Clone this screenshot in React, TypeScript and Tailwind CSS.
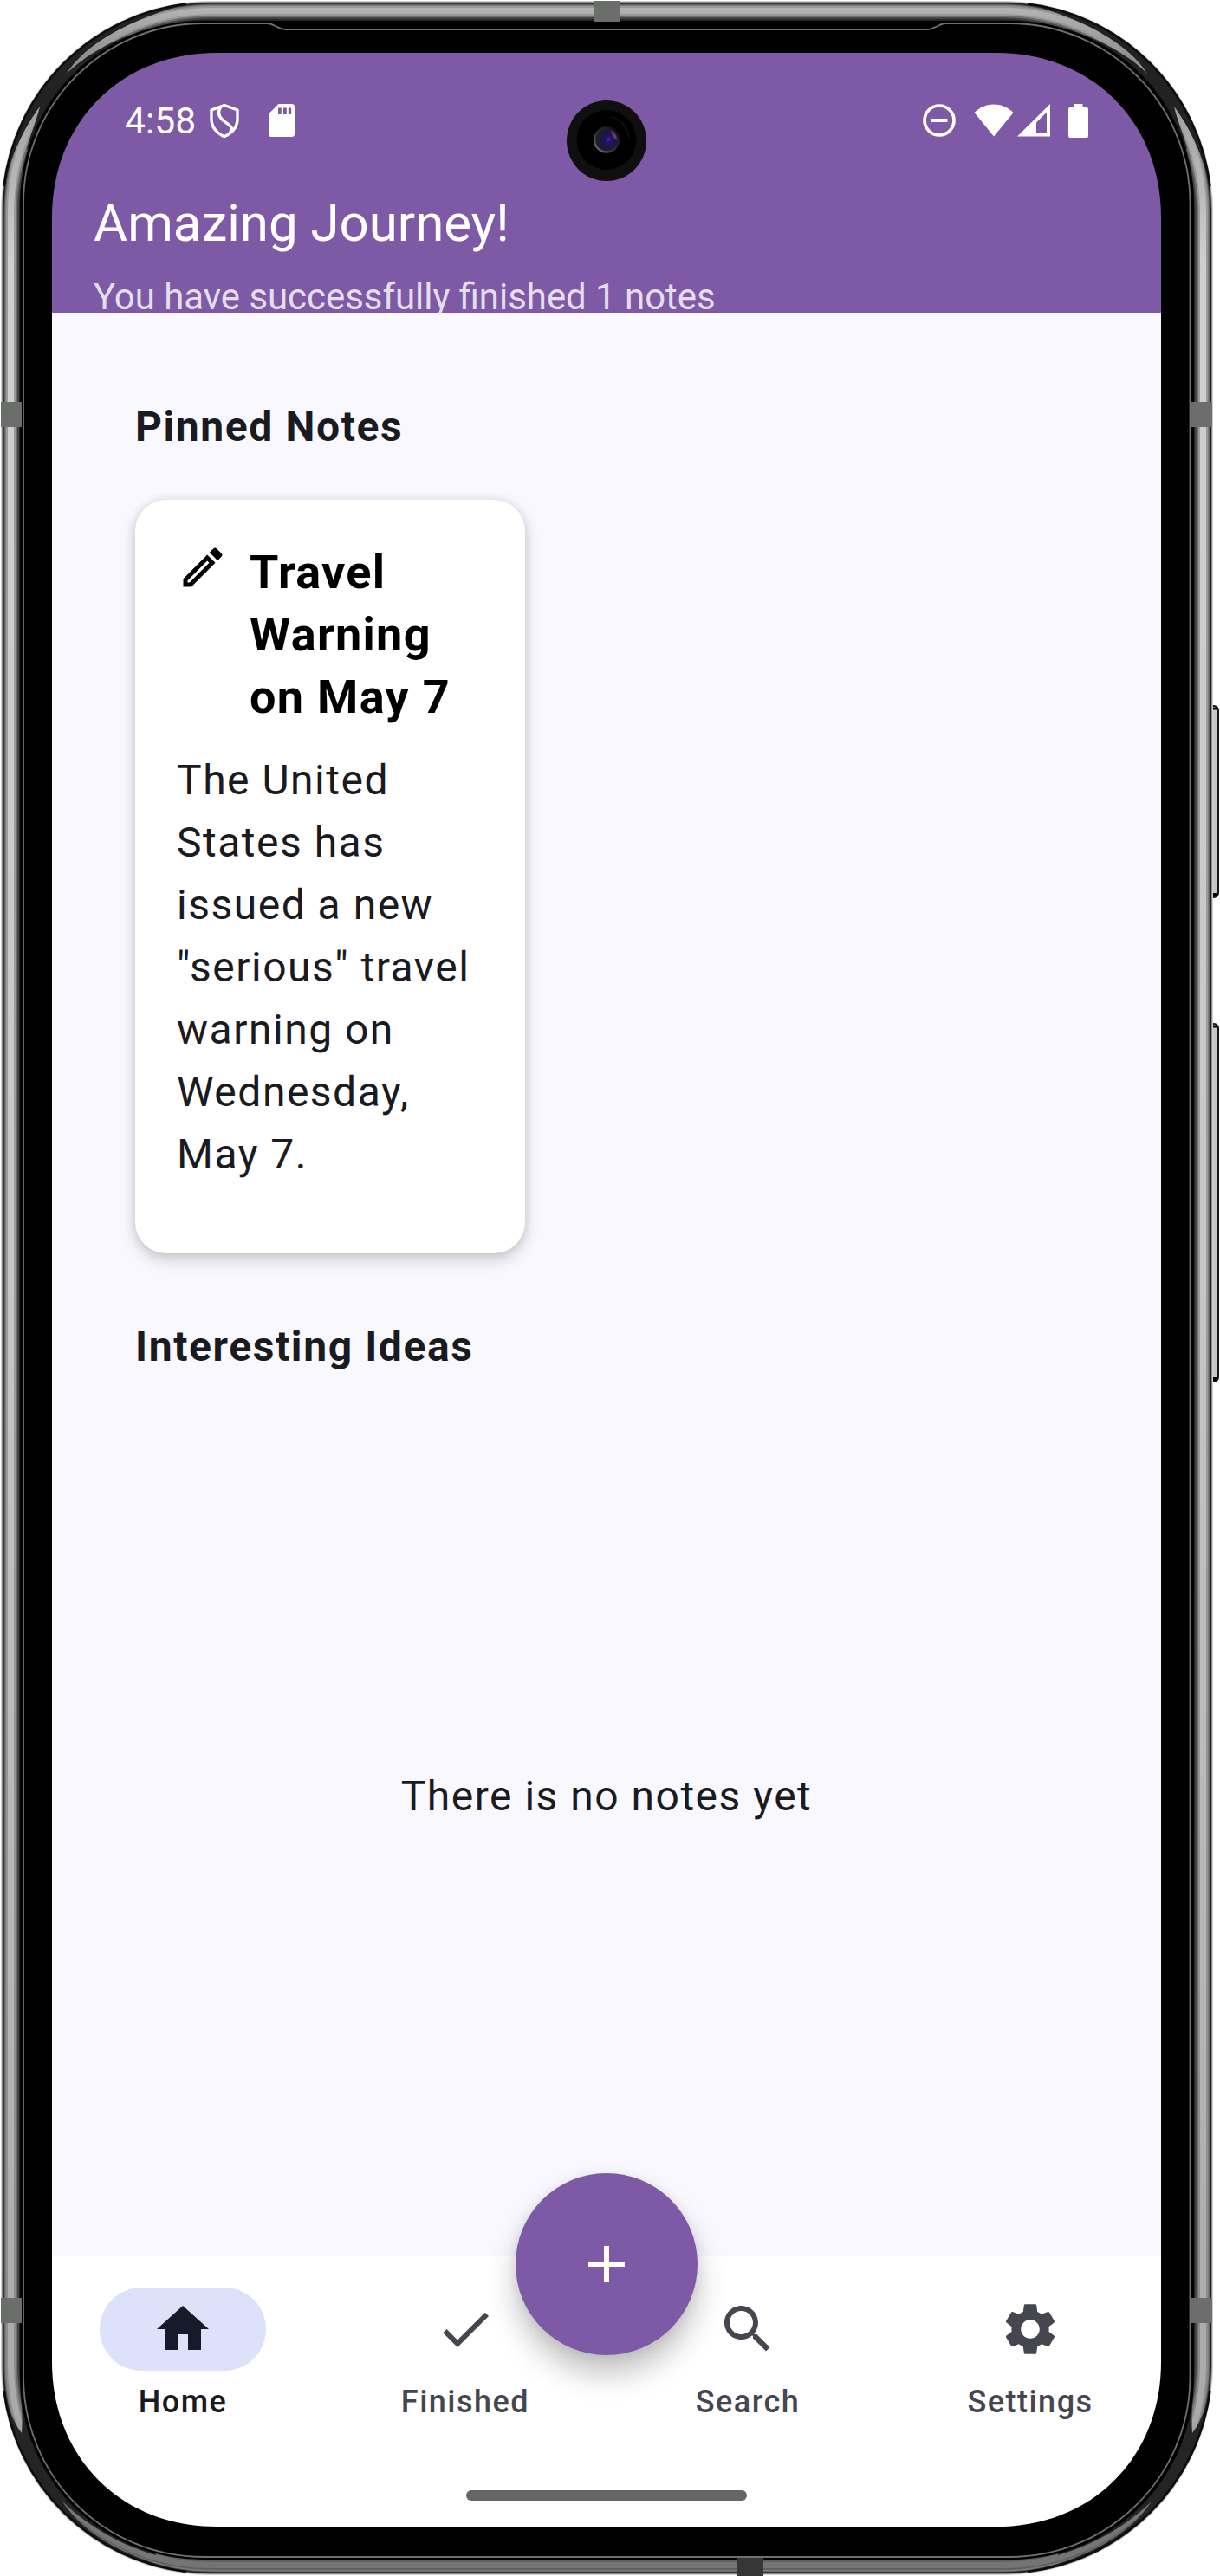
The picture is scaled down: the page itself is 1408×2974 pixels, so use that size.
import React from "react";

// Rounded outline: e is the corner extent, k the handle ratio.
function roundedOutline(x0: number, y0: number, x1: number, y1: number, e: number, k: number) {
  const c = e * (1 - k);
  return `M${x0 + e} ${y0}H${x1 - e}C${x1 - c} ${y0} ${x1} ${y0 + c} ${x1} ${y0 + e}V${y1 - e}C${x1} ${y1 - c} ${x1 - c} ${y1} ${x1 - e} ${y1}H${x0 + e}C${x0 + c} ${y1} ${x0} ${y1 - c} ${x0} ${y1 - e}V${y0 + e}C${x0} ${y0 + c} ${x0 + c} ${y0} ${x0 + e} ${y0}Z`;
}

const screenHole = roundedOutline(60, 61, 1340, 2917, 190, 0.58);
const glass = roundedOutline(23, 24, 1378, 2955, 212, 0.56);

const layers = [
  { i: -1, c: "#cfcfcf" },
  { i: 0, c: "#8a8a8a" },
  { i: 1, c: "#222" },
  { i: 2.5, c: "#4a4a4a" },
  { i: 3.5, c: "#7d7d7d" },
  { i: 5, c: "url(#metalEdge)" },
  { i: 7, c: "url(#metal)" },
  { i: 14, c: "url(#metalEdge)" },
  { i: 16, c: "#6e6e6e" },
  { i: 18, c: "#444" },
  { i: 20, c: "#262626" },
];

// Dark wedges where the polished band narrows at each corner.
function TopCorner() {
  return (
    <g>
      <path d="M215 5A242 242 0 0 0 5 215C12 180 28 147 46 123C42 140 36 152 31 172L60 165L165 60L165 35C130 46 98 64 77 85C98 50 155 20 215 5Z" fill="#222" />
      <path d="M215 4.500A241 241 0 0 0 4.500 215" stroke="#0c0c0c" strokeWidth="2.5" />
    </g>
  );
}

function BottomCorner() {
  return (
    <g>
      <path d="M4 2755A242 242 0 0 0 215 2969C150 2955 98 2928 72 2888C105 2920 145 2940 180 2950L180 2920L60 2800L23 2760C26 2780 26 2795 25 2809C14 2795 8 2775 4 2755Z" fill="#242424" />
      <path d="M4.500 2760A241 241 0 0 0 215 2969" stroke="#0c0c0c" strokeWidth="2.5" />
    </g>
  );
}

function SideButton({ y, h }: { y: number; h: number }) {
  return (
    <g>
      <rect x="1392" y={y} width="14" height={h} rx="5" fill="#c8c8c8" stroke="#161616" strokeWidth="2" />
      <path d={`M1400 ${y + 3}H1404`} stroke="#000" strokeWidth="3" />
      <path d={`M1400 ${y + h - 3}H1404`} stroke="#000" strokeWidth="4" />
    </g>
  );
}

function Bezel() {
  const seam = "#6b6e6a";
  return (
    <svg className="pointer-events-none absolute inset-0 h-full w-full" viewBox="0 0 1408 2974" fill="none">
      <defs>
        <linearGradient id="metal" x1="0" y1="0" x2="0" y2="1">
          <stop offset="0" stopColor="#b4b4b4" />
          <stop offset="0.02" stopColor="#8f8f8f" />
          <stop offset="0.05" stopColor="#aaa" />
          <stop offset="0.1" stopColor="#d0d0d0" />
          <stop offset="0.5" stopColor="#c6c6c6" />
          <stop offset="0.85" stopColor="#b0b0b0" />
          <stop offset="0.94" stopColor="#aaa" />
          <stop offset="0.975" stopColor="#777" />
          <stop offset="1" stopColor="#747474" />
        </linearGradient>
        <linearGradient id="metalEdge" x1="0" y1="0" x2="0" y2="1">
          <stop offset="0" stopColor="#999" />
          <stop offset="0.5" stopColor="#9c9c9c" />
          <stop offset="0.94" stopColor="#8c8c8c" />
          <stop offset="0.975" stopColor="#666" />
          <stop offset="1" stopColor="#606060" />
        </linearGradient>
        <mask id="hole">
          <path d="M0 0H1408V2974H0Z" fill="#fff" />
          <path d={screenHole} fill="#000" />
        </mask>
      </defs>
      <SideButton y={815} h={221} />
      <SideButton y={1182} h={413} />
      <g mask="url(#hole)">
        {layers.map((l) => (
          <path key={l.i} d={roundedOutline(2 + l.i, 2 + l.i, 1399 - l.i, 2972 - l.i, 243 - l.i, 0.56)} fill={l.c} />
        ))}
        <TopCorner />
        <g transform="translate(1401 0) scale(-1 1)">
          <TopCorner />
        </g>
        <BottomCorner />
        <g transform="translate(1401 0) scale(-1 1)">
          <BottomCorner />
        </g>
        <path d={glass} fill="#000" />
        <path
          d="M27 235C27 120 120 27 235 27H308C317 27 320 34 331 34H1069C1080 34 1083 27 1092 27H1165C1280 27 1373.500 120 1373.500 235V2744C1373.500 2859 1280 2952 1165 2952H235C120 2952 27 2859 27 2744Z"
          stroke="#707070"
          strokeWidth="1.8"
        />
      </g>
      <rect x="686" y="1" width="29" height="24" fill={seam} />
      <rect x="851" y="2953" width="30" height="21" fill="#363636" />
      <rect x="1" y="464" width="24" height="29" fill={seam} />
      <rect x="1375" y="464" width="24" height="29" fill={seam} />
      <rect x="1" y="2653" width="24" height="29" fill={seam} />
      <rect x="1375" y="2653" width="24" height="29" fill={seam} />
    </svg>
  );
}

function Camera() {
  return (
    <svg className="absolute left-[654px] top-[115px] h-[94px] w-[92px]" viewBox="0 0 92 94">
      <defs>
        <radialGradient id="lens" cx="0.58" cy="0.48" r="0.6">
          <stop offset="0" stopColor="#3a16c0" />
          <stop offset="0.2" stopColor="#241266" />
          <stop offset="0.55" stopColor="#1b1838" />
          <stop offset="1" stopColor="#16262c" />
        </radialGradient>
        <linearGradient id="rim" x1="1" y1="0" x2="0" y2="1">
          <stop offset="0" stopColor="#0c0c0c" />
          <stop offset="0.6" stopColor="#333" />
          <stop offset="1" stopColor="#777" />
        </linearGradient>
      </defs>
      <ellipse cx="46" cy="47.500" rx="46" ry="46.5" fill="#0f0f0f" />
      <circle cx="46" cy="46.5" r="34.5" fill="#000" />
      <path d="M52 20A27 27 0 0 1 72 46" fill="none" stroke="#0d0d0d" strokeWidth="2" />
      <circle cx="46" cy="46.500" r="14" fill="url(#lens)" stroke="url(#rim)" strokeWidth="2.4" />
      <path d="M51 36C56 38 58 42 58 47C55 45 52 41 51 36Z" fill="#6a3a72" />
      <circle cx="48" cy="46" r="1.500" fill="#4a22ff" />
    </svg>
  );
}

function StatusBar() {
  return (
    <div className="flex h-[156px] items-center pl-[84px] pr-[84px] text-white">
      <span className="w-[98px] text-[42.6px] leading-[50px]">4:58</span>
      <svg className="h-[41px] w-[34px]" viewBox="0 0 34 40" fill="none" stroke="#fff" strokeWidth="3.4">
        <path d="M17 2L32 7.5V18C32 27 26 34.500 17 38C8 34.500 2 27 2 18V7.500Z" strokeLinejoin="round" />
        <path d="M13 3.500C8.500 10 10 15 16 20C24 26 28.500 28 23 34" />
      </svg>
      <svg className="ml-[34px] h-[38px] w-[30px]" viewBox="0 0 30 38">
        <path fill="#fff" fillRule="evenodd" d="M11.500 0H27C28.700 0 30 1.300 30 3V35C30 36.700 28.700 38 27 38H3C1.300 38 0 36.700 0 35V11.500ZM11 4.500V12H14.800V4.500ZM17 4.500V12H20.800V4.500ZM22.800 4.500V12H26.200V4.500Z" />
      </svg>
      <svg className="ml-auto h-[38px] w-[38px]" viewBox="0 0 38 38" fill="none" stroke="#fff">
        <circle cx="19" cy="19" r="17" strokeWidth="3.700" />
        <path d="M9.500 19H28.500" strokeWidth="4" />
      </svg>
      <svg className="ml-[21px] h-[38px] w-[46px]" viewBox="0 0 46 38">
        <path fill="#fff" d="M0.500 10C13 -2.800 33 -2.800 45.500 10L23 37.500Z" />
      </svg>
      <svg className="ml-[4px] h-[38px] w-[38px]" viewBox="0 0 38 38">
        <path fill="#fff" fillRule="evenodd" d="M38 0V37.500H0ZM34 9.500L22 21.500V34H34Z" />
      </svg>
      <svg className="ml-[21px] h-[39px] w-[23px]" viewBox="0 0 23 39">
        <path fill="#fff" d="M7 0H16.500V4H21Q23 4 23 6V37Q23 39 21 39H2Q0 39 0 37V6Q0 4 2 4H7Z" />
      </svg>
    </div>
  );
}

const navItems = [
  { label: "Home", d: "M10 20v-6h4v6h5v-8h3L12 3 2 12h3v8z" },
  { label: "Finished", d: "M9 16.170L4.830 12l-1.420 1.410L9 19 21 7l-1.410-1.410z" },
  {
    label: "Search",
    d: "M15.500 14h-.79l-.28-.27C15.410 12.590 16 11.110 16 9.500 16 5.910 13.090 3 9.500 3S3 5.910 3 9.500 5.910 16 9.500 16c1.610 0 3.090-.59 4.230-1.570l.27.28v.79l5 4.990L20.490 19l-4.990-5zm-6 0C7.010 14 5 11.990 5 9.500S7.010 5 9.500 5 14 7.010 14 9.500 11.990 14 9.500 14z",
  },
  {
    label: "Settings",
    d: "M19.140 12.940c.04-.3.06-.61.06-.94 0-.32-.02-.64-.07-.94l2.030-1.580c.18-.14.23-.41.12-.61l-1.920-3.320c-.12-.22-.37-.29-.59-.22l-2.390.96c-.5-.38-1.030-.7-1.620-.94l-.36-2.540c-.04-.24-.24-.41-.48-.41h-3.840c-.24 0-.43.17-.47.41l-.36 2.540c-.59.24-1.130.57-1.620.94l-2.390-.96c-.22-.08-.47 0-.59.22L2.740 8.870c-.12.21-.08.47.12.61l2.030 1.580c-.05.3-.09.63-.09.94s.02.64.07.94l-2.030 1.580c-.18.14-.23.41-.12.61l1.920 3.320c.12.22.37.29.59.22l2.390-.96c.5.38 1.030.7 1.620.94l.36 2.540c.05.24.24.41.48.41h3.840c.24 0 .44-.17.47-.41l.36-2.540c.59-.24 1.130-.56 1.620-.94l2.390.96c.22.08.47 0 .59-.22l1.920-3.320c.12-.22.07-.47-.12-.61l-2.010-1.580zM12 15.600c-1.980 0-3.600-1.620-3.600-3.600s1.620-3.600 3.600-3.600 3.600 1.620 3.600 3.600-1.620 3.600-3.600 3.600z",
  },
];

function BottomNav() {
  return (
    <nav className="relative flex h-[312px] shrink-0 flex-col bg-white">
      <div className="flex items-start justify-between pt-9">
        {navItems.map((item, i) => (
          <div key={item.label} className="flex w-[302px] flex-col items-center">
            <div
              className={
                i === 0
                  ? "flex h-24 w-48 items-center justify-center rounded-full bg-[#dde1f9] text-[#161b2c]"
                  : "flex h-24 w-48 items-center justify-center text-[#45464f]"
              }
            >
              <svg className="h-[72px] w-[72px]" viewBox="0 0 24 24" fill="currentColor">
                <path d={item.d} />
              </svg>
            </div>
            <span
              className={
                i === 0
                  ? "mt-3 text-[36px] font-medium leading-[48px] tracking-[1.5px] text-[#1a1b21]"
                  : "mt-3 text-[36px] font-medium leading-[48px] tracking-[1.5px] text-[#45464f]"
              }
            >
              {item.label}
            </span>
          </div>
        ))}
      </div>
      <div className="mx-auto mb-[30px] mt-auto h-3 w-[324px] rounded-full bg-[#666]" />
      <button className="absolute left-[535px] top-[-96px] flex h-[210px] w-[210px] items-center justify-center rounded-full bg-[#7e5aa6] shadow-[0_22px_34px_rgba(0,0,0,0.24),0_2px_14px_rgba(0,0,0,0.08)]">
        <svg className="h-[72px] w-[72px]" viewBox="0 0 24 24" fill="#fff">
          <path d="M19 13h-6v6h-2v-6H5v-2h6V5h2v6h6v2z" />
        </svg>
      </button>
    </nav>
  );
}

export default function App() {
  return (
    <div className="relative h-[2974px] w-[1408px] overflow-hidden bg-white px-[60px] pt-[61px] font-['Roboto',sans-serif]">
      <div className="flex h-[2856px] w-[1280px] flex-col overflow-hidden rounded-[150px] bg-[#f9f8ff]">
        <header className="h-[300px] shrink-0 overflow-hidden bg-[#7e5aa6]">
          <StatusBar />
          <h1 className="whitespace-nowrap pl-12 pt-[2px] text-[60px] leading-[78px] text-white">Amazing Journey!</h1>
          <p className="mt-[18px] whitespace-nowrap pl-12 text-[41.9px] leading-[56px] text-[#e5deed]">You have successfully finished 1 notes</p>
        </header>
        <main className="flex min-h-0 flex-1 flex-col px-24 pt-24 text-[48px] leading-[72px] tracking-[1.5px] text-[#1a1b21]">
          <h2 className="font-bold tracking-[1.6px]">Pinned Notes</h2>
          <article className="mt-12 h-[870px] w-[450px] rounded-[36px] bg-white p-12 shadow-[0_8px_18px_rgba(0,0,0,0.17),0_0_12px_rgba(0,0,0,0.1)]">
            <div className="flex">
              <svg className="h-[60px] w-[60px] shrink-0" viewBox="0 0 24 24" fill="#000">
                <path d="M14.060 9.020l.92.92L5.920 19H5v-.92l9.060-9.060M17.660 3c-.25 0-.51.1-.7.29l-1.830 1.830 3.750 3.750 1.830-1.830c.39-.39.39-1.020 0-1.410l-2.340-2.340c-.2-.2-.45-.29-.71-.29zm-3.600 3.190L3 17.250V21h3.750L17.810 9.940l-3.750-3.750z" />
              </svg>
              <h3 className="ml-6 text-[54px] font-bold tracking-[1.3px] text-black">Travel Warning on May 7</h3>
            </div>
            <p className="mt-6">The United States has issued a new "serious" travel warning on Wednesday, May 7.</p>
          </article>
          <h2 className="mt-[72px] font-bold tracking-[1.6px]">Interesting Ideas</h2>
          <p className="mt-[447px] text-center">There is no notes yet</p>
        </main>
        <BottomNav />
      </div>
      <Bezel />
      <Camera />
    </div>
  );
}
